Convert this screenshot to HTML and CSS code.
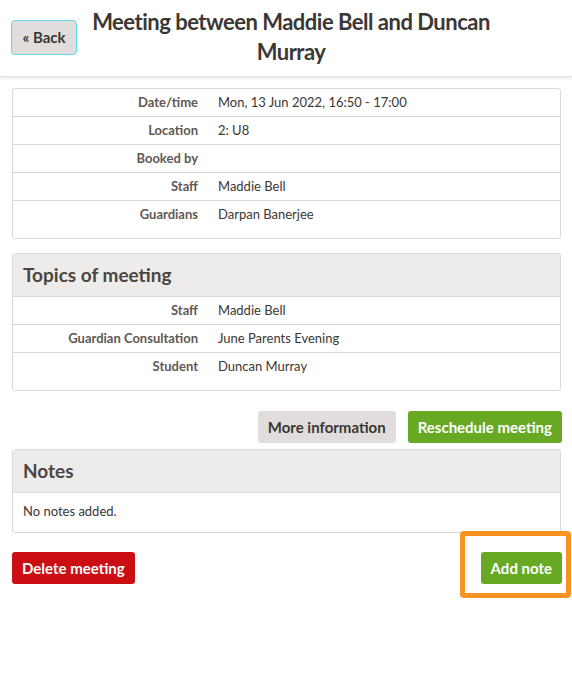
FILE: index.html
```html
<!DOCTYPE html>
<html lang="en">
<head>
    <meta charset="UTF-8">
    <meta name="viewport" content="width=device-width, initial-scale=1.0">
    <title>Meeting</title>
    <link rel="stylesheet" href="styles.css">
</head>
<body>
    <div class="header">
        <button class="btn btn-back">&laquo; Back</button>
        <h1>Meeting between Maddie Bell and Duncan Murray</h1>
    </div>

    <div class="content">
        <div class="card">
            <table class="details">
                <tr><th>Date/time</th><td>Mon, 13 Jun 2022, 16:50 - 17:00</td></tr>
                <tr><th>Location</th><td>2: U8</td></tr>
                <tr><th>Booked by</th><td></td></tr>
                <tr><th>Staff</th><td>Maddie Bell</td></tr>
                <tr><th>Guardians</th><td>Darpan Banerjee</td></tr>
            </table>
        </div>

        <div class="card">
            <div class="card-title">Topics of meeting</div>
            <table class="details">
                <tr><th>Staff</th><td>Maddie Bell</td></tr>
                <tr><th>Guardian Consultation</th><td>June Parents Evening</td></tr>
                <tr><th>Student</th><td>Duncan Murray</td></tr>
            </table>
        </div>

        <div class="actions">
            <button class="btn btn-grey">More information</button>
            <button class="btn btn-green">Reschedule meeting</button>
        </div>

        <div class="card card-notes">
            <div class="card-title">Notes</div>
            <div class="card-body">No notes added.</div>
        </div>

        <div class="footer-actions">
            <button class="btn btn-red">Delete meeting</button>
            <div class="highlight">
                <button class="btn btn-green">Add note</button>
            </div>
        </div>
    </div>
</body>
</html>
```

FILE: styles.css
```css
body {
    margin: 0;
    font-family: Lato, "Open Sans", sans-serif;
    color: #3b3734;
    background: white;
}
.header {
    display: flex;
    align-items: center;
    padding: 7px 0 9px 11px;
    border-bottom: 1px solid #e2e0df;
    box-shadow: 0 2px 3px rgba(0,0,0,0.08);
}
.header h1 {
    flex: 1;
    margin: 0 71px 0 4px;
    font-size: 22px;
    letter-spacing: -0.5px;
    line-height: 30px;
    text-align: center;
    font-weight: bold;
}
.btn {
    font-family: inherit;
    font-size: 15px;
    font-weight: bold;
    height: 32px;
    padding: 0 10px;
    border: none;
    border-radius: 3px;
    cursor: pointer;
}
.btn-back {
    height: 35px;
    width: 66px;
    padding: 0;
    background: #e1dddc;
    color: #3b3734;
    border: 1px solid #62d6ef;
    border-radius: 4px;
}
.btn-grey {
    background: #e1dddc;
    color: #3b3734;
}
.btn-green {
    background: #68a923;
    color: white;
}
.btn-red {
    background: #cb0e12;
    color: white;
}
.content {
    padding: 11px 11px 60px 12px;
}
.card {
    border: 1px solid #dcd8d6;
    border-radius: 3px;
    padding-bottom: 10px;
    margin-bottom: 14px;
}
.card-title {
    background: #eeeceb;
    height: 42px;
    line-height: 42px;
    padding: 0 10px;
    font-size: 19px;
    font-weight: bold;
    border-bottom: 1px solid #dcd8d6;
    color: #4a4542;
}
.details {
    width: 100%;
    border-collapse: collapse;
    font-size: 13px;
}
.details tr + tr {
    border-top: 1px solid #dcd8d6;
}
.details th,
.details td {
    height: 25px;
    padding: 0 10px 2px;
    vertical-align: middle;
}
.details th {
    width: 175px;
    text-align: right;
    color: #5f5853;
}
.details td {
    text-align: left;
}
.actions {
    display: flex;
    justify-content: flex-end;
    gap: 12px;
    margin: 20px -1px 6px 0;
}
.card-notes {
    padding-bottom: 0;
    margin-bottom: 19px;
}
.card-body {
    padding: 9px 10px 11px;
    line-height: 19px;
    font-size: 13px;
}
.footer-actions {
    display: flex;
    justify-content: space-between;
    margin-right: -1px;
}
.highlight {
    position: relative;
    display: flex;
}
.highlight::after {
    content: "";
    position: absolute;
    left: -21px;
    right: -9px;
    top: -21px;
    bottom: -14px;
    border: 5px solid #f7931e;
    border-radius: 4px;
}
```
